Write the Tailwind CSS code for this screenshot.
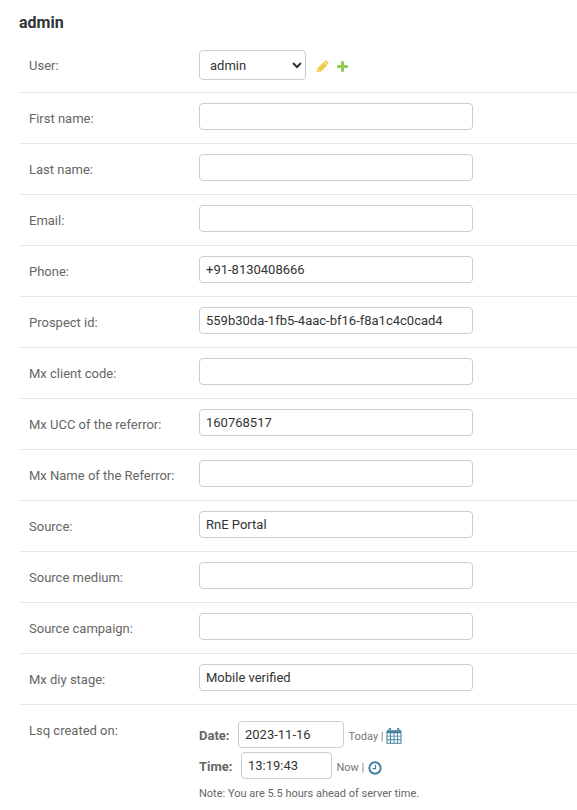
<!DOCTYPE html>
<html lang="en">
<head>
    <meta charset="UTF-8">
    <meta name="viewport" content="width=device-width, initial-scale=1.0">
    <title>admin</title>
    <script src="https://cdn.jsdelivr.net/npm/@tailwindcss/browser@4"></script>
</head>
<body class="bg-white h-[810px] overflow-hidden font-['Roboto',sans-serif] text-[13px] text-[#666]">
    <form class="pl-[19px] pt-[13px]">
        <h1 class="h-[27px] text-base leading-5 font-bold text-[#333]">admin</h1>

        <!-- User -->
        <div class="flex h-[53px] border-b border-[#e8e8e8] pl-2.5 pt-2.5">
            <label for="user" class="w-[170px] pt-2 leading-4">User:</label>
            <select id="user" class="w-[107px] h-[30px] rounded border border-[#ccc] bg-white px-1.5 text-[13px] text-[#333]">
                <option>admin</option>
            </select>
            <a class="ml-2.5 mt-[10px]">
                <svg class="w-[13px] h-[13px]" viewBox="0 0 13 13">
                    <path fill="#f2c63c" d="M.8 12.2l.7-4L7.800 1.900l3.400 3.400-6.300 6.200zM8.400 1.400l.6-.6q.8-.6 1.500 0l1.700 1.700q.6.700 0 1.500l-.500.600z"/>
                    <path fill="#fff" d="M2 9.600l1.400 1.400-1.100.3-.600-.6z"/>
                    <path stroke="#fff" stroke-width=".5" stroke-opacity=".6" d="M3.400 8.200l4.800-4.800"/>
                </svg>
            </a>
            <a class="ml-[7px] mt-[10px]">
                <svg class="w-[13px] h-[13px]" viewBox="0 0 13 13">
                    <path fill="#70bf2b" fill-opacity=".8" d="M5 1.200h3V5h3.800v3H8v3.800H5V8H1.200V5H5z"/>
                </svg>
            </a>
        </div>

        <!-- Text fields -->
        <div class="flex h-[51px] border-b border-[#e8e8e8] pl-2.5 pt-2.5">
            <label class="w-[170px] pt-2 leading-4">First name:</label>
            <input type="text" class="w-[274px] h-[27px] rounded border border-[#ccc] px-1.5 text-[#333]">
        </div>
        <div class="flex h-[51px] border-b border-[#e8e8e8] pl-2.5 pt-2.5">
            <label class="w-[170px] pt-2 leading-4">Last name:</label>
            <input type="text" class="w-[274px] h-[27px] rounded border border-[#ccc] px-1.5 text-[#333]">
        </div>
        <div class="flex h-[51px] border-b border-[#e8e8e8] pl-2.5 pt-2.5">
            <label class="w-[170px] pt-2 leading-4">Email:</label>
            <input type="text" class="w-[274px] h-[27px] rounded border border-[#ccc] px-1.5 text-[#333]">
        </div>
        <div class="flex h-[51px] border-b border-[#e8e8e8] pl-2.5 pt-2.5">
            <label class="w-[170px] pt-2 leading-4">Phone:</label>
            <input type="text" value="+91-8130408666" class="w-[274px] h-[27px] rounded border border-[#ccc] px-1.5 text-[#333]">
        </div>
        <div class="flex h-[51px] border-b border-[#e8e8e8] pl-2.5 pt-2.5">
            <label class="w-[170px] pt-2 leading-4">Prospect id:</label>
            <input type="text" value="559b30da-1fb5-4aac-bf16-f8a1c4c0cad4" class="w-[274px] h-[27px] rounded border border-[#ccc] px-1.5 text-[#333]">
        </div>
        <div class="flex h-[51px] border-b border-[#e8e8e8] pl-2.5 pt-2.5">
            <label class="w-[170px] pt-2 leading-4">Mx client code:</label>
            <input type="text" class="w-[274px] h-[27px] rounded border border-[#ccc] px-1.5 text-[#333]">
        </div>
        <div class="flex h-[51px] border-b border-[#e8e8e8] pl-2.5 pt-2.5">
            <label class="w-[170px] pt-2 leading-4">Mx UCC of the referror:</label>
            <input type="text" value="160768517" class="w-[274px] h-[27px] rounded border border-[#ccc] px-1.5 text-[#333]">
        </div>
        <div class="flex h-[51px] border-b border-[#e8e8e8] pl-2.5 pt-2.5">
            <label class="w-[170px] pt-2 leading-4">Mx Name of the Referror:</label>
            <input type="text" class="w-[274px] h-[27px] rounded border border-[#ccc] px-1.5 text-[#333]">
        </div>
        <div class="flex h-[51px] border-b border-[#e8e8e8] pl-2.5 pt-2.5">
            <label class="w-[170px] pt-2 leading-4">Source:</label>
            <input type="text" value="RnE Portal" class="w-[274px] h-[27px] rounded border border-[#ccc] px-1.5 text-[#333]">
        </div>
        <div class="flex h-[51px] border-b border-[#e8e8e8] pl-2.5 pt-2.5">
            <label class="w-[170px] pt-2 leading-4">Source medium:</label>
            <input type="text" class="w-[274px] h-[27px] rounded border border-[#ccc] px-1.5 text-[#333]">
        </div>
        <div class="flex h-[51px] border-b border-[#e8e8e8] pl-2.5 pt-2.5">
            <label class="w-[170px] pt-2 leading-4">Source campaign:</label>
            <input type="text" class="w-[274px] h-[27px] rounded border border-[#ccc] px-1.5 text-[#333]">
        </div>
        <div class="flex h-[51px] border-b border-[#e8e8e8] pl-2.5 pt-2.5">
            <label class="w-[170px] pt-2 leading-4">Mx diy stage:</label>
            <input type="text" value="Mobile verified" class="w-[274px] h-[27px] rounded border border-[#ccc] px-1.5 text-[#333]">
        </div>

        <!-- Date and time -->
        <div class="flex pl-2.5 pt-2.5">
            <label class="w-[170px] pt-2 leading-4">Lsq created on:</label>
            <div class="pt-1.5">
                <div class="flex h-[27px] items-center">
                    <span class="w-[39px] pt-[3px] font-bold">Date:</span>
                    <input type="text" value="2023-11-16" class="w-[106px] h-[27px] rounded border border-[#ccc] px-1.5 text-[#333]">
                    <span class="ml-[4.5px] pt-[5px] text-[11px] text-[#777]">Today |</span>
                    <svg class="ml-[2.5px] mt-[3px] w-4 h-4" viewBox="0 0 16 16">
                        <path fill="#417f9c" d="M.5 3.400Q.5 2.300 1.500 2.300H2.500V1.400Q2.500 0 3.800 0t1.300 1.400v.9h5.800v-.9Q10.900 0 12.200 0t1.300 1.400v.9h1q1 0 1 1.100V15.800H.5z"/>
                        <path stroke="#fff" stroke-width=".7" stroke-opacity=".6" d="M3.800 1v2.400M12.200 1v2.400"/>
                        <path fill="#fff" d="M1.500 5.200h2.500v2.500H1.500zM5 5.200h2.600v2.500H5zM8.500 5.200h2.600v2.500H8.500zM12 5.200h2.500v2.500H12zM1.500 8.600h2.500v2.700H1.500zM5 8.600h2.600v2.700H5zM8.500 8.600h2.600v2.700H8.500zM12 8.600h2.500v2.700H12zM1.500 12.200h2.500v2.600H1.500zM5 12.200h2.600v2.600H5zM8.500 12.200h2.600v2.600H8.500zM12 12.200h2.500v2.600H12z"/>
                    </svg>
                </div>
                <div class="mt-1 flex h-[27px] items-center">
                    <span class="w-[42px] pt-[3px] font-bold">Time:</span>
                    <input type="text" value="13:19:43" class="w-[91px] h-[27px] rounded border border-[#ccc] px-1.5 text-[#333]">
                    <span class="ml-[4.5px] pt-[5px] text-[11px] text-[#777]">Now |</span>
                    <svg class="ml-[3.5px] mt-[4px] w-[14px] h-[14px]" viewBox="0 0 14 14" fill="none" stroke="#417f9c">
                        <circle cx="7" cy="7" r="5.7" stroke-width="1.9"/>
                        <path stroke-width="1.1" d="M7.500 3.800v3.800H4.600"/>
                    </svg>
                </div>
                <p class="mt-2 text-[11px] leading-[14px]">Note: You are 5.5 hours ahead of server time.</p>
            </div>
        </div>
    </form>
</body>
</html>
